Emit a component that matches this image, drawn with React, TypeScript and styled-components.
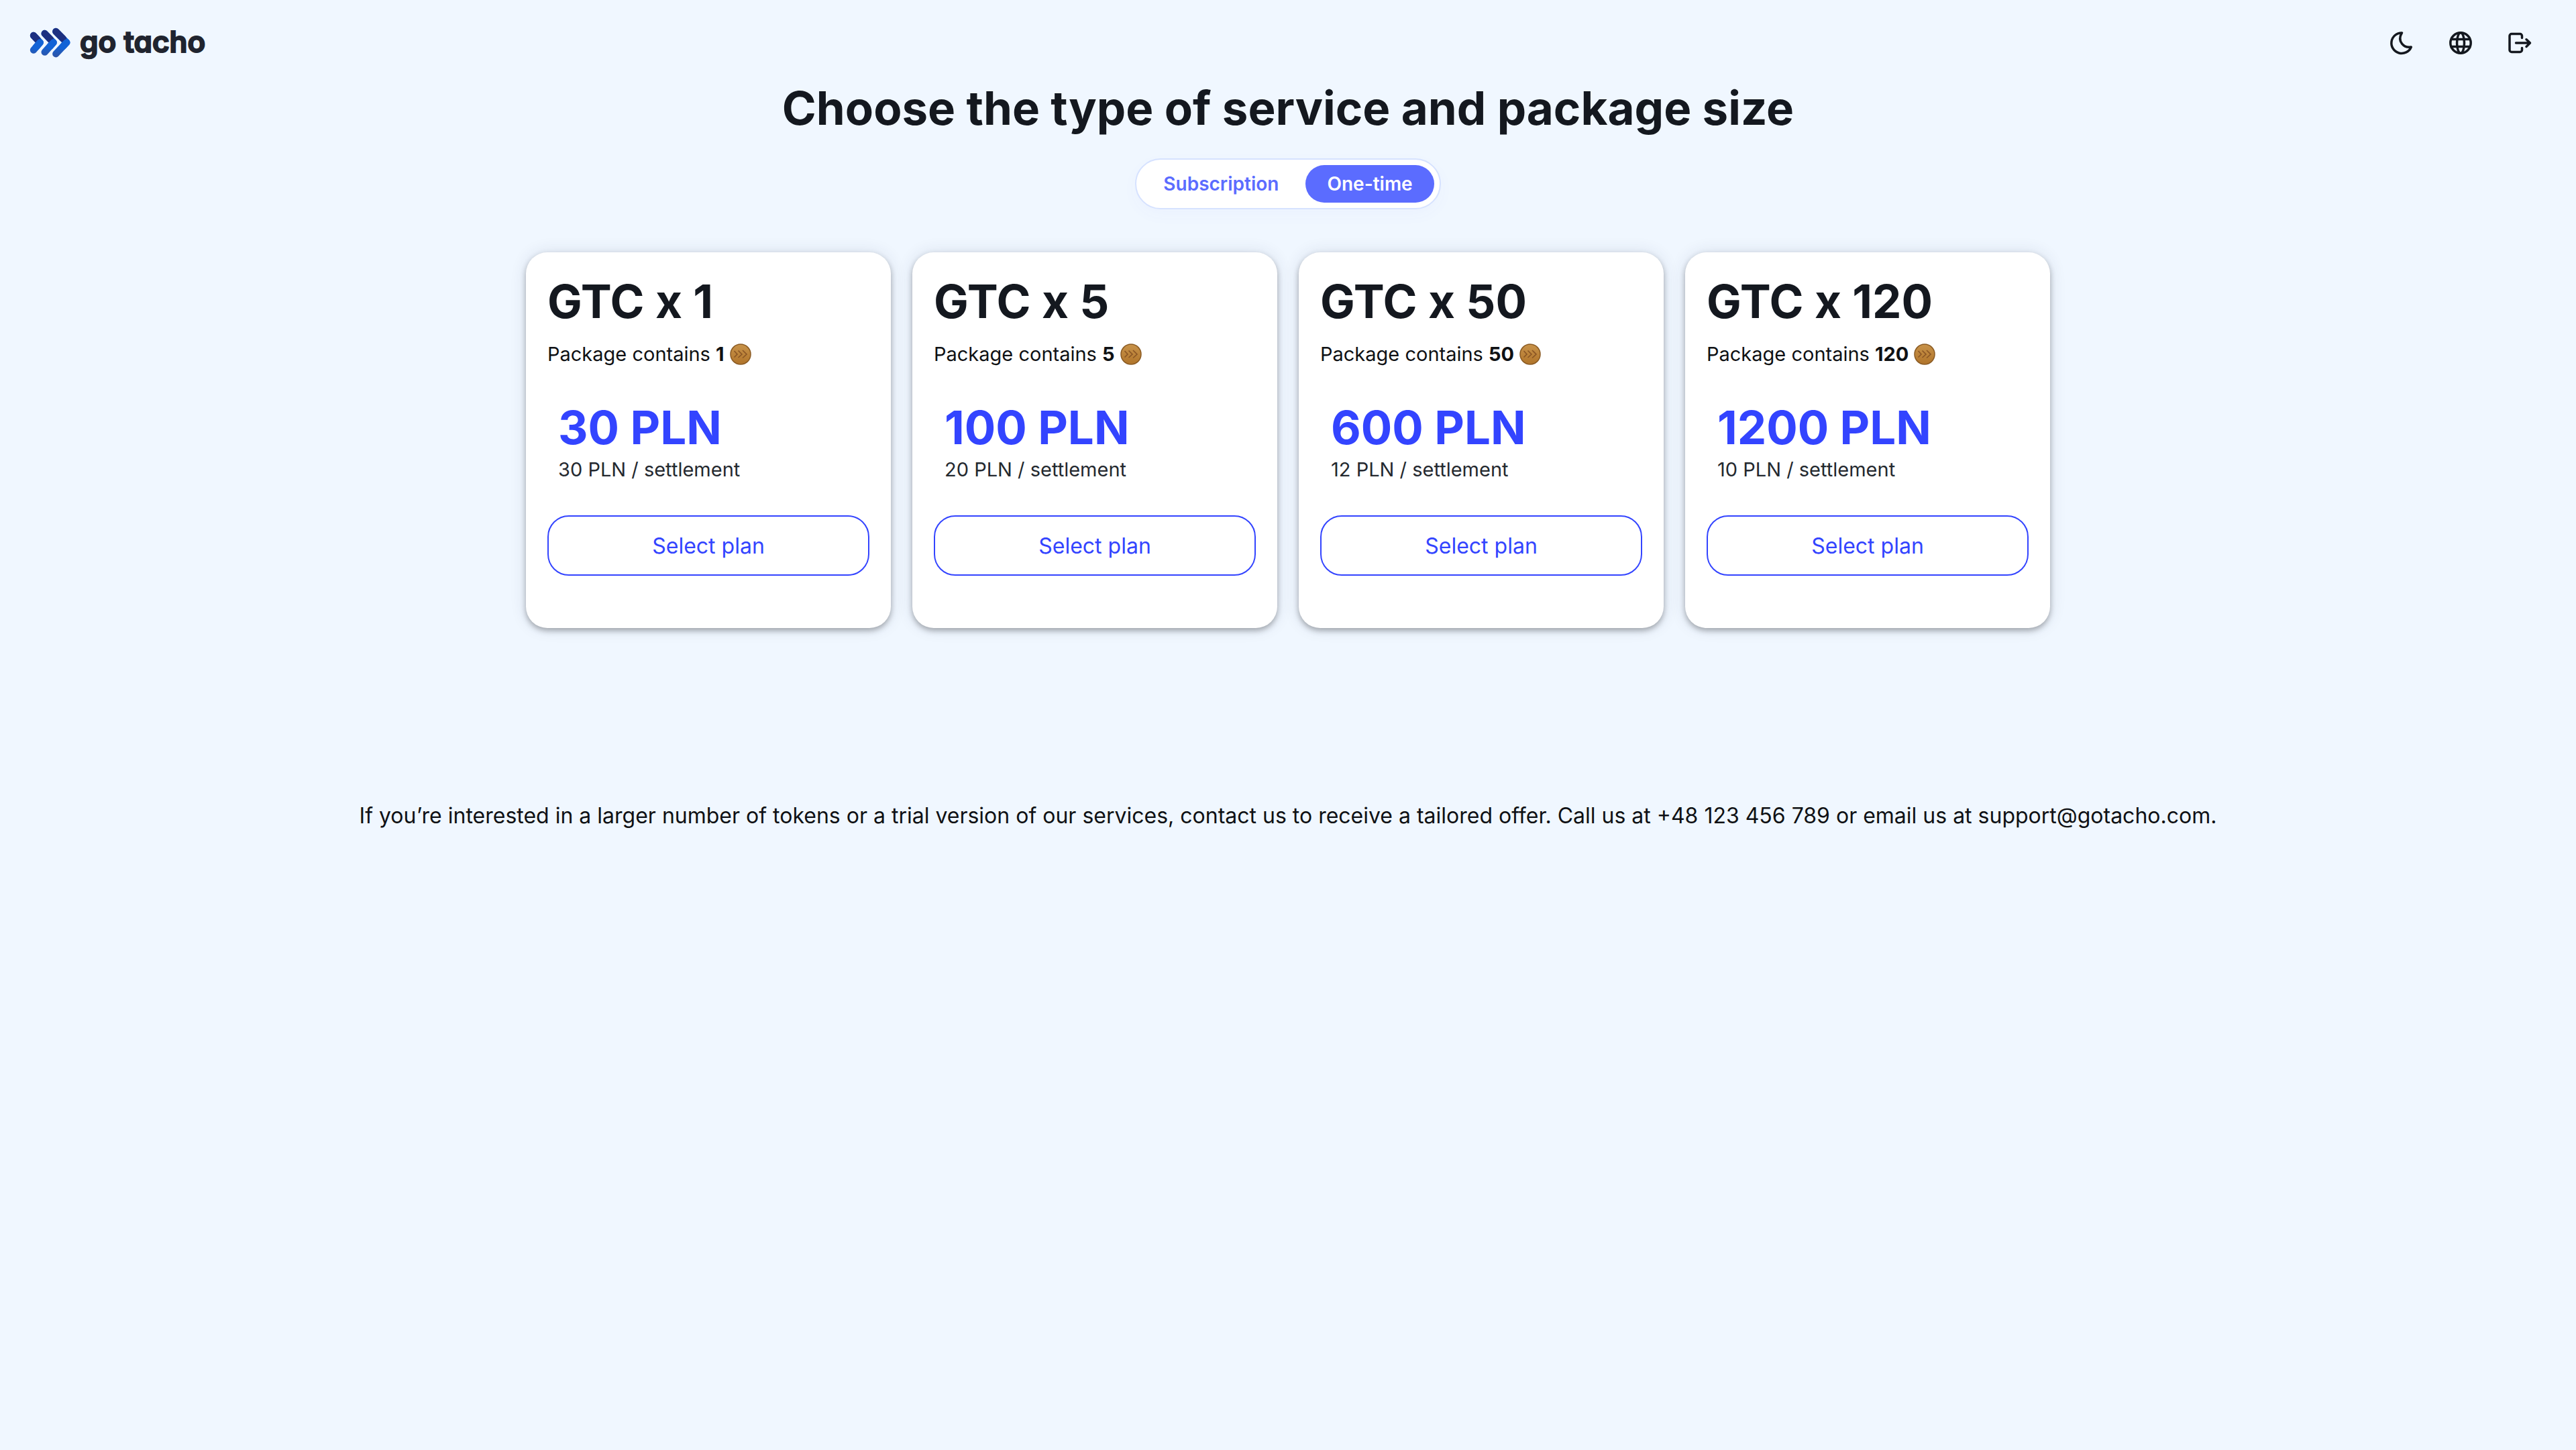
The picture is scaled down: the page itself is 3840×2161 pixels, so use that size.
import React, { useState } from "react";
import styled, { createGlobalStyle } from "styled-components";

const color = {
  page: "#f0f7ff",
  ink: "#14181f",
  text: "#0f1114",
  muted: "#24292f",
  brand: "#3344ff",
  accent: "#5b6cff",
  outline: "#d6e2ff",
};

const GlobalStyle = createGlobalStyle`
  *, *::before, *::after { box-sizing: border-box; }
  body {
    margin: 0;
    background: ${color.page};
    color: ${color.text};
    font-family: Inter, "Liberation Sans", sans-serif;
  }
  h1, h2, p { margin: 0; }
  button { font-family: inherit; cursor: pointer; }
`;

const Header = styled.header`
  display: flex;
  align-items: center;
  justify-content: space-between;
  padding: 32px 52px 24px 44px;
`;

const Brand = styled.a`
  display: flex;
  align-items: center;
  gap: 13px;
  color: #20242f;
  text-decoration: none;
`;

const BrandName = styled.span`
  padding-bottom: 4px;
  font-size: 44px;
  line-height: 60px;
  font-weight: 600;
  font-feature-settings: "cv11";
  -webkit-text-stroke: 2px currentColor;
  stroke-linejoin: round;
`;

const Actions = styled.nav`
  display: flex;
  gap: 24px;
`;

const IconButton = styled.button`
  display: grid;
  place-items: center;
  width: 64px;
  height: 64px;
  padding: 0;
  border: 0;
  border-radius: 50%;
  background: none;
  color: ${color.ink};
`;

const Main = styled.main`
  display: flex;
  flex-direction: column;
  align-items: center;
`;

const Heading = styled.h1`
  font-size: 69px;
  line-height: 82px;
  font-weight: 700;
  color: ${color.ink};
  text-align: center;
`;

const Toggle = styled.div`
  display: flex;
  gap: 8px;
  margin-top: 34px;
  padding: 8px;
  border: 2px solid ${color.outline};
  border-radius: 38px;
  background: #fff;
  box-shadow: 0 8px 24px rgba(91, 108, 255, 0.03);
`;

const ToggleOption = styled.button<{ $active: boolean }>`
  height: 56px;
  padding: 0 32px;
  border: 0;
  border-radius: 28px;
  background: ${(p) => (p.$active ? color.accent : "transparent")};
  color: ${(p) => (p.$active ? "#fff" : color.accent)};
  font-size: 28px;
  line-height: 56px;
  font-weight: 600;
`;

const Plans = styled.section`
  display: flex;
  flex-wrap: wrap;
  justify-content: center;
  gap: 32px;
  margin-top: 64px;
`;

const Card = styled.article`
  width: 544px;
  padding: 32px 32px 78px;
  border-radius: 32px;
  background: #fff;
  box-shadow: 0 4px 8px rgba(0, 0, 0, 0.3), 0 0 24px rgba(40, 50, 90, 0.12);
`;

const PlanName = styled.h2`
  font-size: 69px;
  line-height: 82px;
  font-weight: 700;
  color: ${color.ink};
`;

const Contents = styled.p`
  display: flex;
  align-items: center;
  gap: 8px;
  margin-top: 16px;
  font-size: 29px;
  line-height: 44px;
`;

const PriceBlock = styled.div`
  margin: 46px 0;
  padding: 0 16px;
`;

const Price = styled.p`
  font-size: 69px;
  line-height: 82px;
  font-weight: 700;
  color: ${color.brand};
`;

const UnitPrice = styled.p`
  font-size: 29px;
  line-height: 44px;
  color: ${color.muted};
`;

const SelectButton = styled.button`
  display: block;
  width: 100%;
  height: 90px;
  border: 2px solid ${color.brand};
  border-radius: 32px;
  background: #fff;
  color: ${color.brand};
  font-size: 32px;
`;

const Note = styled.p`
  margin-top: 260px;
  font-size: 32px;
  line-height: 40px;
  text-align: center;
`;

const LogoMark = () => (
  <svg width="62" height="46" viewBox="0 0 186 138" fill="none" strokeWidth="31" strokeLinecap="round" strokeLinejoin="round" aria-hidden="true">
    <defs>
      <linearGradient id="arm" x1="0" y1="60" x2="0" y2="130" gradientUnits="userSpaceOnUse">
        <stop offset="0.3" stopColor="#1263d6" />
        <stop offset="1" stopColor="#2d55a8" />
      </linearGradient>
    </defs>
    <path d="M18 36 47 67 18 101" stroke="url(#arm)" />
    <path d="M18 36 35 54" stroke="#1c2f80" />
    <path d="M47 67 30 87" stroke="#1263d6" />
    <path d="M68 27 107 67 68 110" stroke="url(#arm)" />
    <path d="M68 27 93 53" stroke="#1c2f80" />
    <path d="M107 67 92 84" stroke="#1263d6" />
    <path d="M118 18 166 67 118 118" stroke="url(#arm)" />
    <path d="M118 18 150 50" stroke="#1c2f80" />
    <path d="M166 67 150 84" stroke="#1263d6" />
  </svg>
);

const MoonIcon = () => (
  <svg width="40" height="40" viewBox="0 0 40 40" fill="none" stroke="currentColor" strokeWidth="3.5" strokeLinejoin="round" aria-hidden="true">
    <path d="M20.5 4.9A15.3 15.3 0 1 0 34.3 26C24 28 12.5 18 20.5 4.9Z" />
  </svg>
);

const GlobeIcon = () => (
  <svg width="40" height="40" viewBox="0 0 40 40" fill="none" stroke="currentColor" strokeWidth="3.5" aria-hidden="true">
    <circle cx="20" cy="20" r="15.2" />
    <ellipse cx="20" cy="20" rx="5.5" ry="15.2" />
    <path d="M6 14.5H34M6 25.5H34" />
  </svg>
);

const ExitIcon = () => (
  <svg width="40" height="40" viewBox="0 0 40 40" fill="none" stroke="currentColor" strokeWidth="3.5" strokeLinecap="round" strokeLinejoin="round" aria-hidden="true">
    <path d="M23.5 12.5V9.5a3 3 0 0 0-3-3H8a3 3 0 0 0-3 3v21a3 3 0 0 0 3 3H20.5a3 3 0 0 0 3-3V27.5" />
    <path d="M14.5 20H35M30 14.8 35.5 20 30 25.5" />
  </svg>
);

const CoinIcon = () => (
  <svg width="32" height="32" viewBox="0 0 32 32" fill="none" aria-hidden="true">
    <defs>
      <linearGradient id="coin" x1="0" y1="0" x2="0" y2="1">
        <stop offset="0" stopColor="#c8934a" />
        <stop offset="1" stopColor="#b0742a" />
      </linearGradient>
    </defs>
    <circle cx="16" cy="16" r="15" fill="url(#coin)" stroke="#8a5a22" strokeWidth="1.5" />
    <path d="M6.5 11 11 16 6.5 20.5M12.5 10.5 18 16 12.5 21M19 10 25 16 19 21.5" stroke="#8a5524" strokeWidth="1.6" />
  </svg>
);

const plans = [
  { tokens: 1, price: 30, unit: 30 },
  { tokens: 5, price: 100, unit: 20 },
  { tokens: 50, price: 600, unit: 12 },
  { tokens: 120, price: 1200, unit: 10 },
];

const modes = ["Subscription", "One-time"];

export default function App() {
  const [mode, setMode] = useState("One-time");
  return (
    <>
      <GlobalStyle />
      <Header>
        <Brand href="#">
          <LogoMark />
          <BrandName>go tacho</BrandName>
        </Brand>
        <Actions>
          <IconButton aria-label="Dark mode"><MoonIcon /></IconButton>
          <IconButton aria-label="Language"><GlobeIcon /></IconButton>
          <IconButton aria-label="Log out"><ExitIcon /></IconButton>
        </Actions>
      </Header>
      <Main>
        <Heading>Choose the type of service and package size</Heading>
        <Toggle>
          {modes.map((m) => (
            <ToggleOption key={m} $active={m === mode} aria-pressed={m === mode} onClick={() => setMode(m)}>
              {m}
            </ToggleOption>
          ))}
        </Toggle>
        <Plans>
          {plans.map((p) => (
            <Card key={p.tokens}>
              <PlanName>GTC x {p.tokens}</PlanName>
              <Contents>
                <span>Package contains <strong>{p.tokens}</strong></span>
                <CoinIcon />
              </Contents>
              <PriceBlock>
                <Price>{p.price} PLN</Price>
                <UnitPrice>{p.unit} PLN / settlement</UnitPrice>
              </PriceBlock>
              <SelectButton>Select plan</SelectButton>
            </Card>
          ))}
        </Plans>
        <Note>
          If you’re interested in a larger number of tokens or a trial version of our services, contact us to receive a
          tailored offer. Call us at +48 123 456 789 or email us at support@gotacho.com.
        </Note>
      </Main>
    </>
  );
}
